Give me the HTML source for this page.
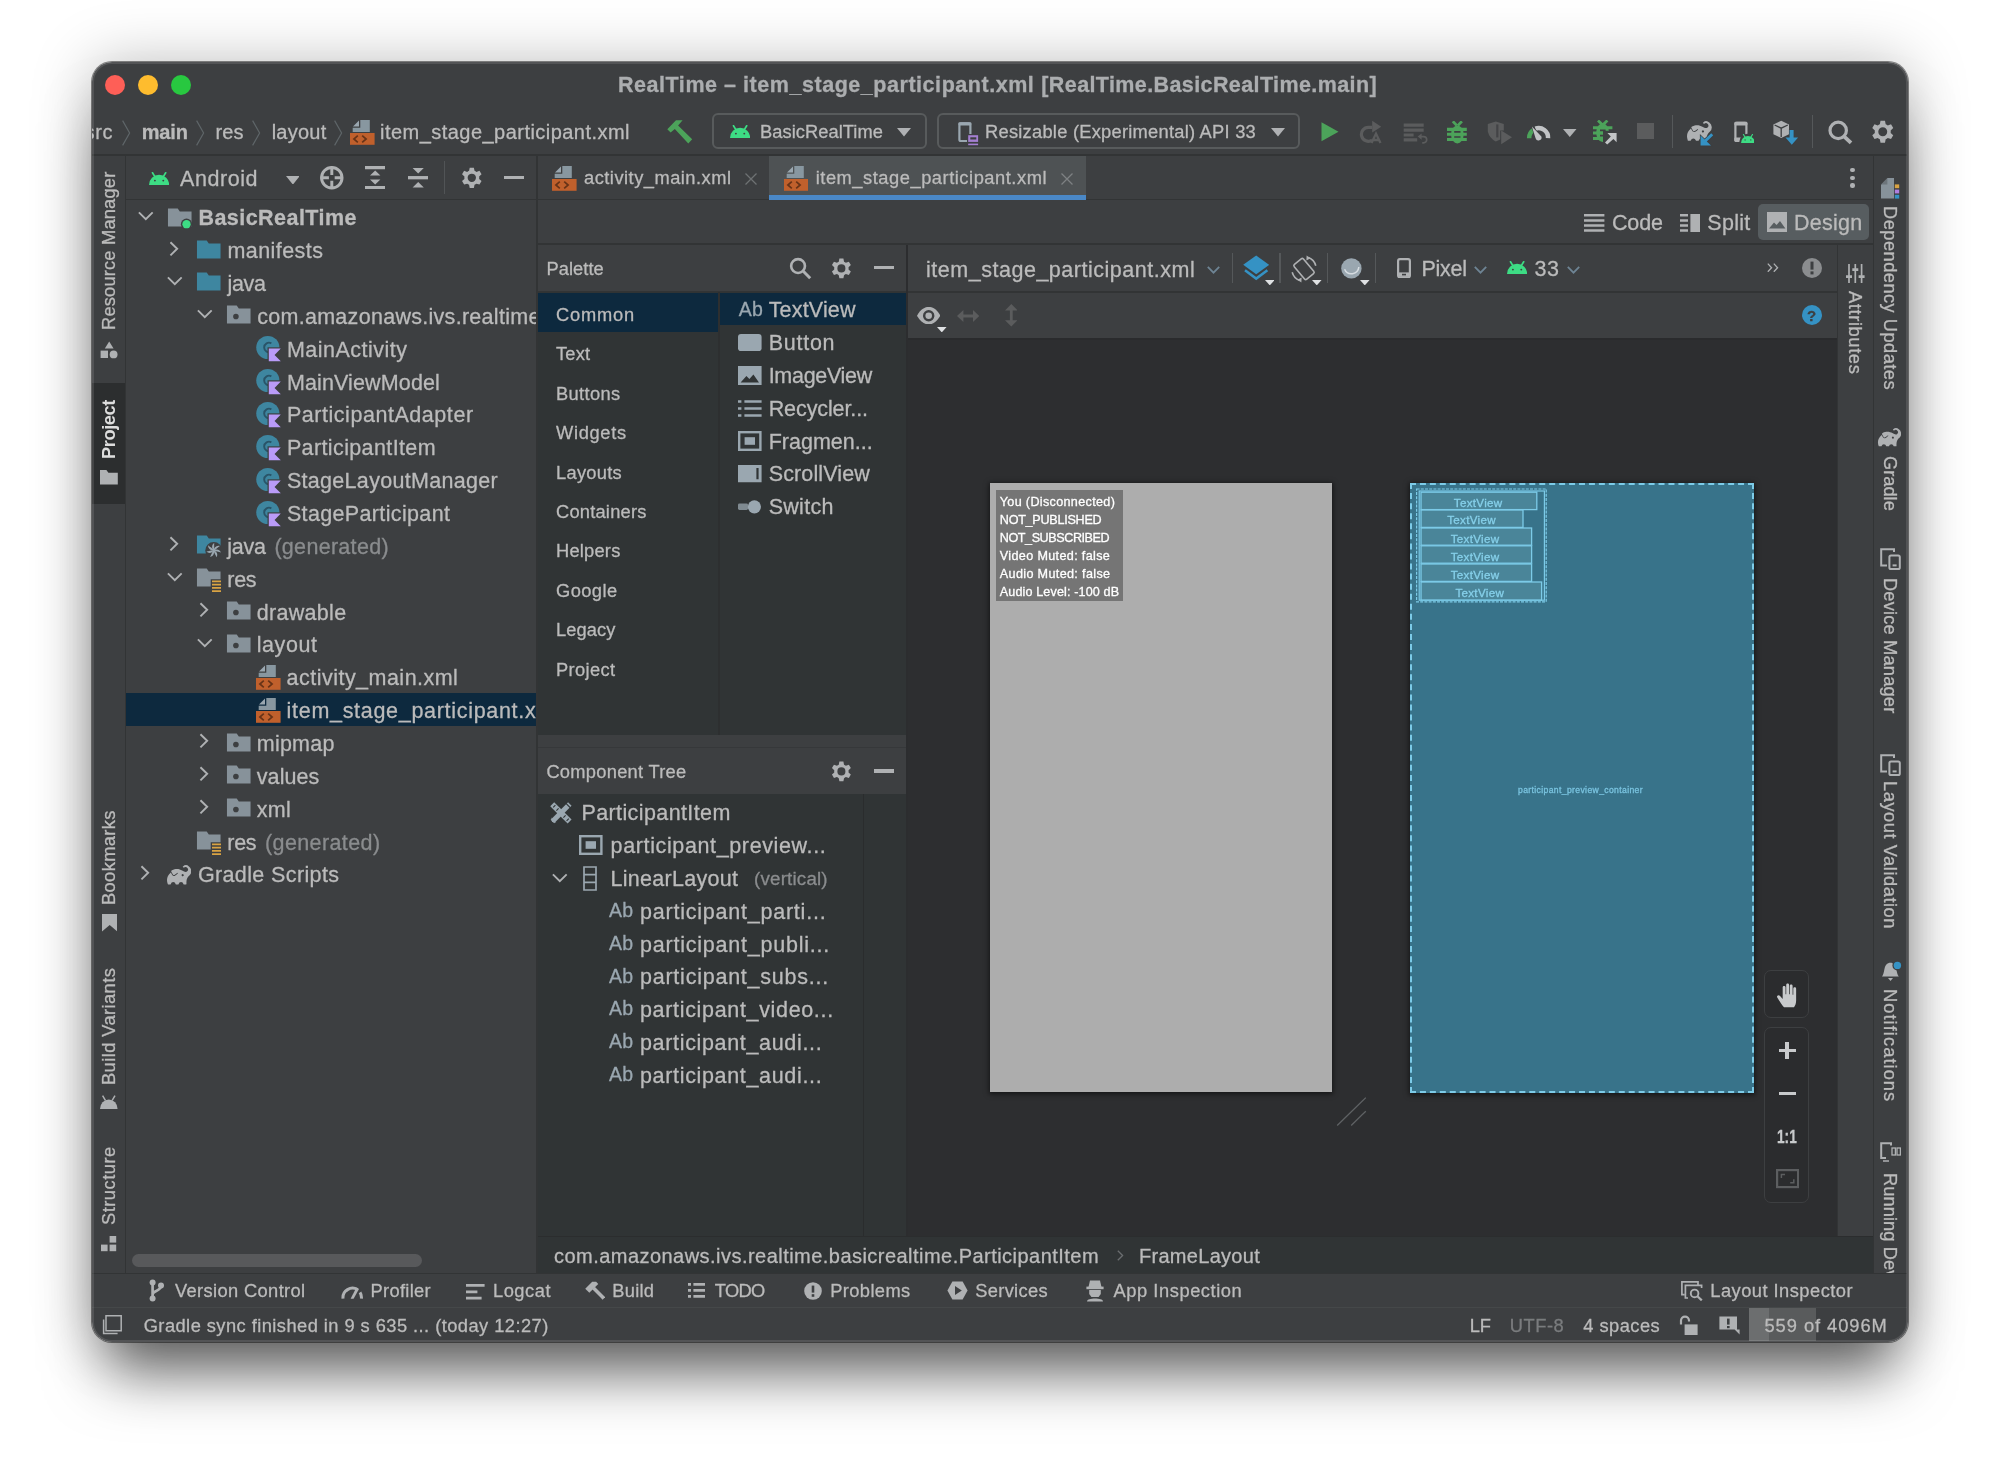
<!DOCTYPE html>
<html lang="en"><head><meta charset="utf-8"><title>RealTime – item_stage_participant.xml</title>
<style>html,body{margin:0;padding:0}body{width:1999px;height:1464px;background:#fff;overflow:hidden;position:relative;font-family:'Liberation Sans',sans-serif;}#win{position:absolute;left:92px;top:62px;width:1816px;height:1279.5px;background:#3d3f41;border-radius:20px;overflow:hidden;will-change:transform;}#shadow{position:absolute;left:92px;top:62px;width:1816px;height:1279.5px;border-radius:20px;box-shadow:0 0 0 1px rgba(0,0,0,.45),0 45px 60px -15px rgba(0,0,0,.58),0 0 60px rgba(0,0,0,.25);}#win div,#win span,#win svg{position:absolute;}#win span{white-space:nowrap;-webkit-text-stroke:0.3px;}#edge{position:absolute;left:91.5px;top:61.5px;width:1816.8px;height:1280.5px;border-radius:20px;box-sizing:border-box;border:2.6px solid rgba(255,255,255,.115);pointer-events:none}</style></head>
<body>
<div id="shadow"></div>
<div id="win">
<div style="left:13.0px;top:13.2px;width:20.0px;height:20.0px;background:#fe5f57;border-radius:50%;"></div>
<div style="left:46.0px;top:13.2px;width:20.0px;height:20.0px;background:#febc2e;border-radius:50%;"></div>
<div style="left:78.8px;top:13.2px;width:20.0px;height:20.0px;background:#28c840;border-radius:50%;"></div>
<span id="t0" style="left:526.0px;top:8.9px;font-size:21.5px;line-height:28px;color:#abadaf;font-weight:bold;letter-spacing:0.542px;">RealTime – item_stage_participant.xml</span>
<span id="t1" style="left:949.3px;top:8.9px;font-size:21.5px;line-height:28px;color:#abadaf;font-weight:bold;letter-spacing:0.395px;">[RealTime.BasicRealTime.main]</span>
<div style="left:-1.0px;top:92.0px;width:1816.0px;height:1.6px;background:#323435;"></div>
<span id="t2" style="left:-7.4px;top:57.4px;font-size:20px;line-height:26px;color:#bbbbbb;letter-spacing:0.642px;">src</span>
<svg style="left:30.0px;top:58.0px;" width="9" height="26" viewBox="0 0 9 26"><path d="M0.6 0.6 L7.6 13 L0.6 25.4" fill="none" stroke="#5e6568" stroke-width="1.2"/></svg>
<span id="t3" style="left:49.7px;top:57.4px;font-size:20px;line-height:26px;color:#bbbbbb;font-weight:bold;letter-spacing:-0.172px;">main</span>
<svg style="left:104.0px;top:58.0px;" width="9" height="26" viewBox="0 0 9 26"><path d="M0.6 0.6 L7.6 13 L0.6 25.4" fill="none" stroke="#5e6568" stroke-width="1.2"/></svg>
<span id="t4" style="left:123.5px;top:57.4px;font-size:20px;line-height:26px;color:#bbbbbb;letter-spacing:0.137px;">res</span>
<svg style="left:160.0px;top:58.0px;" width="9" height="26" viewBox="0 0 9 26"><path d="M0.6 0.6 L7.6 13 L0.6 25.4" fill="none" stroke="#5e6568" stroke-width="1.2"/></svg>
<span id="t5" style="left:179.7px;top:57.4px;font-size:20px;line-height:26px;color:#bbbbbb;letter-spacing:0.236px;">layout</span>
<svg style="left:241.7px;top:58.0px;" width="9" height="26" viewBox="0 0 9 26"><path d="M0.6 0.6 L7.6 13 L0.6 25.4" fill="none" stroke="#5e6568" stroke-width="1.2"/></svg>
<svg style="left:258.0px;top:58.0px;" width="24.6" height="24.8" viewBox="0 0 24.6 24.8"><path d="M10.3 0 H19.8 V12 H2.7 V7.7 H10.3 Z" fill="#8897a0"/><path d="M3 6.4 L9 0.4 V6.4 Z" fill="#9aa7b0"/><rect x="0" y="13" width="24.6" height="11.8" fill="#c0602c"/><path d="M7.8 15.6 L3.9 19 L7.8 22.4 M12.2 15.6 L16.1 19 L12.2 22.4" fill="none" stroke="#4a2410" stroke-width="1.7" opacity=".75"/></svg>
<span id="t6" style="left:288.0px;top:57.4px;font-size:20px;line-height:26px;color:#bbbbbb;letter-spacing:0.466px;">item_stage_participant.xml</span>
<svg style="left:574.0px;top:57.0px;" width="28" height="26" viewBox="0 0 28 26"><path d="M1.3 10.3 L10.0 1.3 L16.6 1.3 L12.1 6.4 L26.2 20.2 L22.3 24.4 L8.8 10.0 L4.6 13.6 Z" fill="#4ca35a"/></svg>
<div style="left:620px;top:51px;width:214.6px;height:36.4px;border:2px solid #585b5c;border-radius:6px;box-sizing:border-box"></div>
<svg style="left:637.7px;top:63.2px;" width="20.2" height="13.0" viewBox="0 0 20.2 13"><path d="M0 13 A10.1 10.2 0 0 1 20.2 13 Z" fill="#3ddc84"/><path d="M3.5 0.8 L6.3 5.4 M16.7 0.8 L13.9 5.4" stroke="#3ddc84" stroke-width="1.7" stroke-linecap="round"/><circle cx="5.9" cy="8.6" r="0.95" fill="#3d3f41"/><circle cx="14.3" cy="8.6" r="0.95" fill="#3d3f41"/></svg>
<span id="t7" style="left:668.0px;top:57.9px;font-size:18.3px;line-height:24px;color:#bbbbbb;letter-spacing:0.057px;">BasicRealTime</span>
<svg style="left:805.0px;top:66.2px;" width="14" height="8.5" viewBox="0 0 14 8.5"><path d="M0 0 H14 L7.0 8.5 Z" fill="#afb1b3"/></svg>
<div style="left:845px;top:51px;width:362.6px;height:36.4px;border:2px solid #585b5c;border-radius:6px;box-sizing:border-box"></div>
<svg style="left:865.0px;top:58.5px;" width="22" height="25" viewBox="0 0 22 25"><rect x="2.4" y="2.4" width="11" height="17.6" rx="1.6" fill="none" stroke="#9aa7b0" stroke-width="2.2"/><rect x="1.3" y="1.3" width="13.2" height="3.2" rx="1.4" fill="#9aa7b0"/><rect x="10" y="13" width="12" height="12" fill="#3d3f41"/><rect x="11.2" y="14.2" width="9.9" height="6.7" fill="#a47fd1"/><rect x="13.3" y="16.3" width="6" height="2.2" fill="#3d3f41"/><rect x="11.2" y="22.6" width="9.9" height="1.6" fill="#a47fd1"/></svg>
<span id="t8" style="left:893.0px;top:57.9px;font-size:18.3px;line-height:24px;color:#bbbbbb;letter-spacing:0.253px;">Resizable (Experimental) API 33</span>
<svg style="left:1178.5px;top:66.2px;" width="14" height="8.5" viewBox="0 0 14 8.5"><path d="M0 0 H14 L7.0 8.5 Z" fill="#afb1b3"/></svg>
<svg style="left:1229.0px;top:60.0px;" width="18" height="20" viewBox="0 0 18 20"><path d="M0.5 0.3 L17.5 9.8 L0.5 19.3 Z" fill="#4ca35a"/></svg>
<svg style="left:1267.0px;top:58.0px;" width="24" height="24" viewBox="0 0 24 24"><path d="M13 7.3 H9.5 A7 7 0 1 0 13.2 20.2" fill="none" stroke="#5b5c5d" stroke-width="3.2"/><path d="M13.2 0.8 L22.2 6.7 L13.2 12.5 Z" fill="#5b5c5d"/><path d="M12.5 23 L17 13.6 L21.5 23 M14 20 H20" fill="none" stroke="#5b5c5d" stroke-width="2.3"/></svg>
<svg style="left:1311.0px;top:60.0px;" width="25" height="22" viewBox="0 0 25 22"><path d="M0.7 3.1 H20.7 M0.7 8.05 H20.7 M0.7 13 H10.6 M0.7 17.95 H14.2" stroke="#5b5c5d" stroke-width="3.2"/><path d="M17.6 14.6 H20.6 A3.1 3.1 0 0 1 20.6 20.8 H19.2" fill="none" stroke="#5b5c5d" stroke-width="1.7"/><path d="M14.7 14.6 L18.6 11.5 V17.7 Z" fill="#5b5c5d"/></svg>
<svg style="left:1353.5px;top:58.5px;" width="22" height="23" viewBox="0 0 22 23"><ellipse cx="11.35" cy="13.4" rx="6.3" ry="9" fill="#4ca35a"/><path d="M1 8.4 H20.8 M1 13.2 H20.8 M1 18.5 H20.8" stroke="#4ca35a" stroke-width="3.1"/><path d="M6.8 0.3 L10.9 4.6 M15.9 0.3 L11.8 4.6" stroke="#4ca35a" stroke-width="2.8"/><path d="M8.2 10.8 H14.5 M8.2 16 H14.5" stroke="#3d3f41" stroke-width="1.7"/></svg>
<svg style="left:1395.0px;top:59.0px;" width="26" height="25" viewBox="0 0 26 25"><path d="M0.8 3 L8.8 0.6 L16.8 3 V9.6 H13.2 V18.4 L8.8 20.6 Q2.4 17.4 0.8 10.6 Z" fill="#5b5c5d"/><path d="M9.2 3.4 H11.4 V16.4 H9.2 Z" fill="#3d3f41" opacity=".8"/><path d="M14.2 9.4 L25 16.3 L14.2 23.3 Z" fill="#5b5c5d"/></svg>
<svg style="left:1434.0px;top:59.0px;" width="26" height="22" viewBox="0 0 26 22"><path d="M3.15 17.2 A9.45 9.45 0 0 1 7.6 8.9" fill="none" stroke="#4ca35a" stroke-width="4.5"/><path d="M9.4 7.6 A9.45 9.45 0 0 1 22.05 17.2" fill="none" stroke="#c2c4c6" stroke-width="4.5"/><path d="M5.9 5.5 L15.4 15.4 A3 3 0 0 1 9.6 17.2 Z" fill="#c2c4c6" stroke="#3d3f41" stroke-width="1.1" paint-order="stroke"/></svg>
<svg style="left:1471.0px;top:66.5px;" width="13.5" height="8" viewBox="0 0 13.5 8"><path d="M0 0 H13.5 L6.75 8 Z" fill="#afb1b3"/></svg>
<svg style="left:1500.0px;top:58.0px;" width="26" height="25" viewBox="0 0 26 25"><ellipse cx="10.6" cy="12.6" rx="6.4" ry="9.4" fill="#4ca35a"/><path d="M1 7.8 H9 M1 13 H9 M1 18.4 H9 M12 7.8 H20.4" stroke="#4ca35a" stroke-width="3"/><path d="M6 0.5 L10.4 4.8 M15.4 0.5 L11 4.8" stroke="#4ca35a" stroke-width="2.8"/><path d="M8 10.4 H13.6 M8 15.6 H12" stroke="#3d3f41" stroke-width="1.6"/><path d="M11 10.8 H26 V25 H11 Z" fill="#3d3f41"/><path d="M15.4 13 H24.6 V22.2 L21.4 19 L15.2 24.6 L13 22.4 L18.8 16.4 Z" fill="#c2c4c6"/></svg>
<div style="left:1545.2px;top:61.4px;width:16.4px;height:16.0px;background:#5b5c5d;"></div>
<div style="left:1580.0px;top:53.0px;width:1.3px;height:33.0px;background:#55585a;"></div>
<svg style="left:1593.9px;top:56.6px;" width="27.2" height="28" viewBox="0 0 27.2 28"><path d="M14.57,2.24A2.75,2.75,0,0,0,10.75,2.2a.26.26,0,0,0,0,.38l.33.34a.26.26,0,0,0,.34,0,1.56,1.56,0,0,1,2.05,2.35c-1.81,1.81-4.22-3.26-9.7-.65a.75.75,0,0,0-.32,1.05l.94,1.62a.74.74,0,0,0,1,.28l0,0,0,0,.41-.23a9.62,9.62,0,0,0,1.29-1,.27.27,0,0,1,.35,0,.25.25,0,0,1,0,.38A10.1,10.1,0,0,1,6.1,7.8l0,0-.41.23a1.22,1.22,0,0,1-.61.16,1.27,1.27,0,0,1-1.1-.63L3.07,6a6.74,6.74,0,0,0-1.95,7.41.26.26,0,0,0,.25.17H2.82a.26.26,0,0,0,.26-.23,1.53,1.53,0,0,1,3,0,.26.26,0,0,0,.26.23H7.79a.26.26,0,0,0,.26-.23,1.53,1.53,0,0,1,3,0,.26.26,0,0,0,.26.23h1.43a.26.26,0,0,0,.26-.26c0-2,0-4,2-5.47A3.66,3.66,0,0,0,14.57,2.24ZM10.92,8.33h0a.66.66,0,1,1,.26-.9A.66.66,0,0,1,10.92,8.33Z" fill="#afb1b3" fill-rule="evenodd" transform="scale(1.6)"/><path d="M26.6 13.6 L16.6 13.6 L16.6 27.6 L27.2 27.6 Z" fill="#3d3f41" opacity="0"/><path d="M25.2 14.2 L27.2 16.2 L20.8 22.6 L25 26.6 H14.6 V16.6 L18.6 20.6 Z" fill="#3592c4" stroke="#3d3f41" stroke-width="1.4" paint-order="stroke"/></svg>
<svg style="left:1641.0px;top:58.0px;" width="23" height="26" viewBox="0 0 23 26"><rect x="2.4" y="2.9" width="11" height="18" rx="1.4" fill="none" stroke="#afb1b3" stroke-width="2.2"/><rect x="1.3" y="1.8" width="13.2" height="3.6" rx="1.4" fill="#afb1b3"/><rect x="1.3" y="17.4" width="13.2" height="4.6" rx="1.4" fill="#afb1b3"/><path d="M6.4 26 V21.4 A8.2 7.6 0 0 1 22.8 21.4 V26 Z" fill="#3d3f41"/></svg>
<svg style="left:1648.6px;top:72.0px;" width="13.9" height="8.9" viewBox="0 0 20.2 13"><path d="M0 13 A10.1 10.2 0 0 1 20.2 13 Z" fill="#3ddc84"/><path d="M3.5 0.8 L6.3 5.4 M16.7 0.8 L13.9 5.4" stroke="#3ddc84" stroke-width="1.7" stroke-linecap="round"/><circle cx="5.9" cy="8.6" r="0.95" fill="#3d3f41"/><circle cx="14.3" cy="8.6" r="0.95" fill="#3d3f41"/></svg>
<svg style="left:1681.0px;top:57.0px;" width="27" height="27" viewBox="0 0 27 27"><path d="M8.2 1.7 L16 5.4 V15.2 L8.2 19 L0.4 15.2 V5.4 Z" fill="#afb1b3"/><path d="M1.6 6 L8.2 9.2 L14.8 6 M8.2 9.2 V18" fill="none" stroke="#3d3f41" stroke-width="1.3"/><path d="M16.6 10.9 H20.6 V18.6 H25.1 L18.8 25.8 L12.5 18.6 H16.6 Z" fill="#3592c4" stroke="#3d3f41" stroke-width="1.3" paint-order="stroke"/></svg>
<div style="left:1719.6px;top:53.0px;width:1.3px;height:33.0px;background:#55585a;"></div>
<svg style="left:1735.5px;top:58.0px;" width="25" height="25" viewBox="0 0 25 25"><circle cx="10.2" cy="10.4" r="8.2" fill="none" stroke="#afb1b3" stroke-width="3.2"/><path d="M16 16.4 L23 22.8" stroke="#afb1b3" stroke-width="3.8"/></svg>
<svg style="left:1776.5px;top:55.6px;" width="27.52" height="27.52" viewBox="0 0 16 16"><path transform="translate(0 0.75)" d="M6.7 0.9 H9.3 L9.7 2.9 A5.4 5.4 0 0 1 10.9 3.6 L12.8 2.9 L14.1 5.1 L12.6 6.5 A5.4 5.4 0 0 1 12.6 8 L14.1 9.3 L12.8 11.5 L10.9 10.9 A5.4 5.4 0 0 1 9.7 11.6 L9.3 13.6 H6.7 L6.3 11.6 A5.4 5.4 0 0 1 5.1 10.9 L3.2 11.5 L1.9 9.3 L3.4 8 A5.4 5.4 0 0 1 3.4 6.5 L1.9 5.1 L3.2 2.9 L5.1 3.6 A5.4 5.4 0 0 1 6.3 2.9 Z M8 4.65 A2.6 2.6 0 1 0 8 9.85 A2.6 2.6 0 1 0 8 4.65 Z" fill="#afb1b3" fill-rule="evenodd"/></svg>
<div style="left:33.0px;top:93.6px;width:1.4px;height:1118.0px;background:#323435;"></div>
<div style="left:0.0px;top:321.0px;width:33.0px;height:121.3px;background:#2c2e2f;"></div>
<span id="t9" style="left:5.3px;top:268.4px;font-size:18.3px;line-height:24px;color:#bbb;transform-origin:0 0;transform:rotate(-90deg);letter-spacing:0.183px;">Resource Manager</span>
<svg style="left:8.0px;top:278.5px;" width="18" height="18" viewBox="0 0 18 18"><path d="M9.2 0.4 L13.6 7.6 H4.8 Z" fill="#afb1b3"/><rect x="0.6" y="9.6" width="7.4" height="7.4" fill="#afb1b3"/><circle cx="13.6" cy="13.4" r="3.9" fill="#afb1b3"/></svg>
<span id="t10" style="left:5.3px;top:397.0px;font-size:18.3px;line-height:24px;color:#dddddd;transform-origin:0 0;transform:rotate(-90deg);font-weight:bold;letter-spacing:-0.426px;-webkit-text-stroke:0;">Project</span>
<svg style="left:8.3px;top:408.3px;" width="18" height="15" viewBox="0 0 18 15"><path d="M0 0 H6.4 L8.4 2.8 H17.8 V14.6 H0 Z" fill="#afb1b3"/></svg>
<span id="t11" style="left:5.3px;top:842.8px;font-size:18.3px;line-height:24px;color:#bbb;transform-origin:0 0;transform:rotate(-90deg);letter-spacing:0.373px;">Bookmarks</span>
<svg style="left:9.5px;top:851.8px;" width="15.5" height="17.8" viewBox="0 0 15.5 17.8"><path d="M0 0 H15.4 V17.6 L7.7 11 L0 17.6 Z" fill="#afb1b3"/></svg>
<span id="t12" style="left:5.3px;top:1022.6px;font-size:18.3px;line-height:24px;color:#bbb;transform-origin:0 0;transform:rotate(-90deg);letter-spacing:0.411px;">Build Variants</span>
<svg style="left:8.4px;top:1032.5px;" width="17.6" height="14" viewBox="0 0 17.6 14"><path d="M0 14 A8.8 9.6 0 0 1 17.6 14 Z" fill="#afb1b3"/><path d="M2.6 0.6 L5.4 5.4 M15 0.6 L12.2 5.4" stroke="#afb1b3" stroke-width="1.5"/></svg>
<span id="t13" style="left:5.3px;top:1163.2px;font-size:18.3px;line-height:24px;color:#bbb;transform-origin:0 0;transform:rotate(-90deg);letter-spacing:0.503px;">Structure</span>
<svg style="left:9.3px;top:1174.0px;" width="15.6" height="15.6" viewBox="0 0 15.6 15.6"><rect x="8.6" y="0" width="6.6" height="6.6" fill="#afb1b3"/><rect x="0" y="8.6" width="6.6" height="6.6" fill="#afb1b3"/><rect x="8.6" y="8.6" width="6.6" height="6.6" fill="#afb1b3"/></svg>
<div style="left:444.0px;top:93.6px;width:1.6px;height:1118.0px;background:#323435;"></div>
<div style="left:34.4px;top:136.8px;width:410.0px;height:1.4px;background:#323435;"></div>
<svg style="left:57.2px;top:109.6px;" width="20.2" height="13.0" viewBox="0 0 20.2 13"><path d="M0 13 A10.1 10.2 0 0 1 20.2 13 Z" fill="#3ddc84"/><path d="M3.5 0.8 L6.3 5.4 M16.7 0.8 L13.9 5.4" stroke="#3ddc84" stroke-width="1.7" stroke-linecap="round"/><circle cx="5.9" cy="8.6" r="0.95" fill="#3d3f41"/><circle cx="14.3" cy="8.6" r="0.95" fill="#3d3f41"/></svg>
<span id="t14" style="left:88.0px;top:102.9px;font-size:21.5px;line-height:28px;color:#bbbbbb;letter-spacing:0.556px;">Android</span>
<svg style="left:193.5px;top:113.7px;" width="13.8" height="8.6" viewBox="0 0 13.8 8.6"><path d="M0 0 H13.8 L6.9 8.6 Z" fill="#afb1b3"/></svg>
<svg style="left:227.0px;top:102.8px;" width="25.6" height="25.6" viewBox="0 0 16 16"><circle cx="8" cy="8" r="6.4" fill="none" stroke="#afb1b3" stroke-width="1.85"/><path d="M8 1 V6.2 M8 9.8 V15 M1 8 H6.2 M9.8 8 H15" stroke="#afb1b3" stroke-width="1.85"/></svg>
<svg style="left:273.0px;top:103.8px;" width="20.4" height="23.4" viewBox="0 0 20.4 23.4"><path d="M0 1.7 H20.4 M0 21.6 H20.4" stroke="#afb1b3" stroke-width="3.3"/><path d="M5 9.4 L10.2 4.6 L15.4 9.4 Z M5 13.4 L10.2 18.6 L15.4 13.4 Z" fill="#afb1b3"/></svg>
<svg style="left:315.7px;top:103.8px;" width="20.4" height="23.4" viewBox="0 0 20.4 23.4"><path d="M0 11.7 H20.4" stroke="#afb1b3" stroke-width="3.3"/><path d="M4.6 2 L10.2 7.6 L15.8 2 Z M4.6 21.6 L10.2 16 L15.8 21.6 Z" fill="#afb1b3"/></svg>
<div style="left:352.0px;top:99.0px;width:1.3px;height:33.0px;background:#515456;"></div>
<svg style="left:366.5px;top:103.4px;" width="25.6" height="25.6" viewBox="0 0 16 16"><path transform="translate(0 0.75)" d="M6.7 0.9 H9.3 L9.7 2.9 A5.4 5.4 0 0 1 10.9 3.6 L12.8 2.9 L14.1 5.1 L12.6 6.5 A5.4 5.4 0 0 1 12.6 8 L14.1 9.3 L12.8 11.5 L10.9 10.9 A5.4 5.4 0 0 1 9.7 11.6 L9.3 13.6 H6.7 L6.3 11.6 A5.4 5.4 0 0 1 5.1 10.9 L3.2 11.5 L1.9 9.3 L3.4 8 A5.4 5.4 0 0 1 3.4 6.5 L1.9 5.1 L3.2 2.9 L5.1 3.6 A5.4 5.4 0 0 1 6.3 2.9 Z M8 4.65 A2.6 2.6 0 1 0 8 9.85 A2.6 2.6 0 1 0 8 4.65 Z" fill="#afb1b3" fill-rule="evenodd"/></svg>
<div style="left:411.7px;top:113.9px;width:20.6px;height:3.4px;background:#afb1b3;"></div>
<div style="left:34.4px;top:631.2px;width:409.6px;height:32.7px;background:#0d293e;"></div>
<svg style="left:40.6px;top:140.6px;" width="25.6" height="25.6" viewBox="0 0 16 16"><path d="M3.7 5.9 L8 10.1 L12.3 5.9" fill="none" stroke="#afb1b3" stroke-width="1.2"/></svg>
<svg style="left:75.3px;top:143.3px;" width="25.6" height="25.6" viewBox="0 0 16 16"><path d="M0.6 2.2 H6.7 L8 4.1 H15.35 V13.45 H0.6 Z" fill="#87929a"/><circle cx="12.2" cy="12" r="3.5" fill="#3d3f41"/><circle cx="12.2" cy="12" r="2.6" fill="#3ddc84"/></svg>
<span id="t15" style="left:106.4px;top:142.2px;font-size:21.5px;line-height:28px;color:#bbbbbb;font-weight:bold;letter-spacing:0.462px;">BasicRealTime</span>
<svg style="left:69.2px;top:173.5px;" width="25.6" height="25.6" viewBox="0 0 16 16"><path d="M5.9 3.9 L10.1 8 L5.9 12.1" fill="none" stroke="#afb1b3" stroke-width="1.2"/></svg>
<svg style="left:104.4px;top:174.6px;" width="25.6" height="25.6" viewBox="0 0 16 16"><path d="M0.6 2.2 H6.7 L8 4.1 H15.35 V13.45 H0.6 Z" fill="#3e86a0"/></svg>
<span id="t16" style="left:135.4px;top:175.1px;font-size:21.5px;line-height:28px;color:#bbbbbb;letter-spacing:0.443px;">manifests</span>
<svg style="left:70.4px;top:206.3px;" width="25.6" height="25.6" viewBox="0 0 16 16"><path d="M3.7 5.9 L8 10.1 L12.3 5.9" fill="none" stroke="#afb1b3" stroke-width="1.2"/></svg>
<svg style="left:104.4px;top:207.4px;" width="25.6" height="25.6" viewBox="0 0 16 16"><path d="M0.6 2.2 H6.7 L8 4.1 H15.35 V13.45 H0.6 Z" fill="#3e86a0"/></svg>
<span id="t17" style="left:135.4px;top:207.9px;font-size:21.5px;line-height:28px;color:#bbbbbb;letter-spacing:-0.263px;">java</span>
<svg style="left:100.0px;top:239.2px;" width="25.6" height="25.6" viewBox="0 0 16 16"><path d="M3.7 5.9 L8 10.1 L12.3 5.9" fill="none" stroke="#afb1b3" stroke-width="1.2"/></svg>
<svg style="left:134.0px;top:240.3px;" width="25.6" height="25.6" viewBox="0 0 16 16"><path d="M0.6 2.2 H6.7 L8 4.1 H15.35 V13.45 H0.6 Z" fill="#87929a"/><circle cx="6.2" cy="9.1" r="1.75" fill="#3d3f41"/></svg>
<div style="left:164.0px;top:238.2px;width:280.0px;height:30.0px;overflow:hidden;">
<span id="t18" style="left:1.2px;top:2.6px;font-size:21.5px;line-height:28px;color:#bbbbbb;letter-spacing:0.288px;">com.amazonaws.ivs.realtime</span>
<span id="t19" style="left:284.7px;top:2.6px;font-size:21.5px;line-height:28px;color:#bbbbbb;letter-spacing:0.169px;">.basicrealtime</span>
</div>
<svg style="left:164.3px;top:273.4px;" width="27.2" height="27.2" viewBox="0 0 17 17"><circle cx="7.4" cy="7.8" r="7.25" fill="#3e86a0"/><path d="M9.6 5.2 A3 3 0 1 0 9.6 10.4" fill="none" stroke="#295468" stroke-width="1.2"/><path d="M7.2 7.7 H17 V17 H7.2 Z" fill="#3d3f41"/><path d="M8 8.5 H15.5 L11.6 12.45 L15.5 16.4 H8 Z" fill="#b99bf8"/></svg>
<span id="t20" style="left:194.9px;top:273.6px;font-size:21.5px;line-height:28px;color:#bbbbbb;letter-spacing:0.500px;">MainActivity</span>
<svg style="left:164.3px;top:306.3px;" width="27.2" height="27.2" viewBox="0 0 17 17"><circle cx="7.4" cy="7.8" r="7.25" fill="#3e86a0"/><path d="M9.6 5.2 A3 3 0 1 0 9.6 10.4" fill="none" stroke="#295468" stroke-width="1.2"/><path d="M7.2 7.7 H17 V17 H7.2 Z" fill="#3d3f41"/><path d="M8 8.5 H15.5 L11.6 12.45 L15.5 16.4 H8 Z" fill="#b99bf8"/></svg>
<span id="t21" style="left:194.9px;top:306.5px;font-size:21.5px;line-height:28px;color:#bbbbbb;letter-spacing:0.132px;">MainViewModel</span>
<svg style="left:164.3px;top:339.2px;" width="27.2" height="27.2" viewBox="0 0 17 17"><circle cx="7.4" cy="7.8" r="7.25" fill="#3e86a0"/><path d="M9.6 5.2 A3 3 0 1 0 9.6 10.4" fill="none" stroke="#295468" stroke-width="1.2"/><path d="M7.2 7.7 H17 V17 H7.2 Z" fill="#3d3f41"/><path d="M8 8.5 H15.5 L11.6 12.45 L15.5 16.4 H8 Z" fill="#b99bf8"/></svg>
<span id="t22" style="left:194.9px;top:339.4px;font-size:21.5px;line-height:28px;color:#bbbbbb;letter-spacing:0.545px;">ParticipantAdapter</span>
<svg style="left:164.3px;top:372.0px;" width="27.2" height="27.2" viewBox="0 0 17 17"><circle cx="7.4" cy="7.8" r="7.25" fill="#3e86a0"/><path d="M9.6 5.2 A3 3 0 1 0 9.6 10.4" fill="none" stroke="#295468" stroke-width="1.2"/><path d="M7.2 7.7 H17 V17 H7.2 Z" fill="#3d3f41"/><path d="M8 8.5 H15.5 L11.6 12.45 L15.5 16.4 H8 Z" fill="#b99bf8"/></svg>
<span id="t23" style="left:194.9px;top:372.2px;font-size:21.5px;line-height:28px;color:#bbbbbb;letter-spacing:0.380px;">ParticipantItem</span>
<svg style="left:164.3px;top:404.9px;" width="27.2" height="27.2" viewBox="0 0 17 17"><circle cx="7.4" cy="7.8" r="7.25" fill="#3e86a0"/><path d="M9.6 5.2 A3 3 0 1 0 9.6 10.4" fill="none" stroke="#295468" stroke-width="1.2"/><path d="M7.2 7.7 H17 V17 H7.2 Z" fill="#3d3f41"/><path d="M8 8.5 H15.5 L11.6 12.45 L15.5 16.4 H8 Z" fill="#b99bf8"/></svg>
<span id="t24" style="left:194.9px;top:405.1px;font-size:21.5px;line-height:28px;color:#bbbbbb;letter-spacing:0.305px;">StageLayoutManager</span>
<svg style="left:164.3px;top:437.7px;" width="27.2" height="27.2" viewBox="0 0 17 17"><circle cx="7.4" cy="7.8" r="7.25" fill="#3e86a0"/><path d="M9.6 5.2 A3 3 0 1 0 9.6 10.4" fill="none" stroke="#295468" stroke-width="1.2"/><path d="M7.2 7.7 H17 V17 H7.2 Z" fill="#3d3f41"/><path d="M8 8.5 H15.5 L11.6 12.45 L15.5 16.4 H8 Z" fill="#b99bf8"/></svg>
<span id="t25" style="left:194.9px;top:437.9px;font-size:21.5px;line-height:28px;color:#bbbbbb;letter-spacing:0.352px;">StageParticipant</span>
<svg style="left:69.2px;top:469.2px;" width="25.6" height="25.6" viewBox="0 0 16 16"><path d="M5.9 3.9 L10.1 8 L5.9 12.1" fill="none" stroke="#afb1b3" stroke-width="1.2"/></svg>
<svg style="left:103.7px;top:470.3px;" width="25.6" height="27.2" viewBox="0 0 16 17"><path d="M0.6 2.2 H6.7 L8 4.1 H15.35 V13.45 H0.6 Z" fill="#3e86a0"/><circle cx="11.1" cy="11.5" r="5.3" fill="#3d3f41"/><g transform="translate(11.1 11.5)" fill="#9aa7b0"><path transform="rotate(0.0)" d="M0.2 0.3 C-1.3 -1.2 -1.6 -3.4 0.3 -4.7 C0.1 -3.4 0.5 -1.4 0.2 0.3 Z"/><path transform="rotate(51.4)" d="M0.2 0.3 C-1.3 -1.2 -1.6 -3.4 0.3 -4.7 C0.1 -3.4 0.5 -1.4 0.2 0.3 Z"/><path transform="rotate(102.9)" d="M0.2 0.3 C-1.3 -1.2 -1.6 -3.4 0.3 -4.7 C0.1 -3.4 0.5 -1.4 0.2 0.3 Z"/><path transform="rotate(154.3)" d="M0.2 0.3 C-1.3 -1.2 -1.6 -3.4 0.3 -4.7 C0.1 -3.4 0.5 -1.4 0.2 0.3 Z"/><path transform="rotate(205.7)" d="M0.2 0.3 C-1.3 -1.2 -1.6 -3.4 0.3 -4.7 C0.1 -3.4 0.5 -1.4 0.2 0.3 Z"/><path transform="rotate(257.1)" d="M0.2 0.3 C-1.3 -1.2 -1.6 -3.4 0.3 -4.7 C0.1 -3.4 0.5 -1.4 0.2 0.3 Z"/><path transform="rotate(308.6)" d="M0.2 0.3 C-1.3 -1.2 -1.6 -3.4 0.3 -4.7 C0.1 -3.4 0.5 -1.4 0.2 0.3 Z"/></g></svg>
<span id="t26" style="left:135.3px;top:470.8px;font-size:21.5px;line-height:28px;color:#bbbbbb;letter-spacing:-0.263px;">java</span>
<span id="t27" style="left:182.4px;top:470.8px;font-size:21.5px;line-height:28px;color:#8a8c8e;letter-spacing:0.304px;">(generated)</span>
<svg style="left:70.4px;top:502.1px;" width="25.6" height="25.6" viewBox="0 0 16 16"><path d="M3.7 5.9 L8 10.1 L12.3 5.9" fill="none" stroke="#afb1b3" stroke-width="1.2"/></svg>
<svg style="left:103.7px;top:503.2px;" width="25.6" height="27.2" viewBox="0 0 16 17"><path d="M0.6 2.2 H6.7 L8 4.1 H15.35 V8.9 H9.2 V13.4 H0.6 Z" fill="#87929a"/><path d="M10 10.3 H16.4 M10 12.3 H16.4 M10 14.3 H16.4 M10 16.3 H16.4" stroke="#d9a343" stroke-width="1.1"/></svg>
<span id="t28" style="left:135.3px;top:503.7px;font-size:21.5px;line-height:28px;color:#bbbbbb;letter-spacing:-0.292px;">res</span>
<svg style="left:98.8px;top:534.9px;" width="25.6" height="25.6" viewBox="0 0 16 16"><path d="M5.9 3.9 L10.1 8 L5.9 12.1" fill="none" stroke="#afb1b3" stroke-width="1.2"/></svg>
<svg style="left:134.0px;top:536.0px;" width="25.6" height="25.6" viewBox="0 0 16 16"><path d="M0.6 2.2 H6.7 L8 4.1 H15.35 V13.45 H0.6 Z" fill="#87929a"/><circle cx="6.2" cy="9.1" r="1.75" fill="#3d3f41"/></svg>
<span id="t29" style="left:164.8px;top:536.5px;font-size:21.5px;line-height:28px;color:#bbbbbb;letter-spacing:0.294px;">drawable</span>
<svg style="left:100.0px;top:567.8px;" width="25.6" height="25.6" viewBox="0 0 16 16"><path d="M3.7 5.9 L8 10.1 L12.3 5.9" fill="none" stroke="#afb1b3" stroke-width="1.2"/></svg>
<svg style="left:134.0px;top:568.9px;" width="25.6" height="25.6" viewBox="0 0 16 16"><path d="M0.6 2.2 H6.7 L8 4.1 H15.35 V13.45 H0.6 Z" fill="#87929a"/><circle cx="6.2" cy="9.1" r="1.75" fill="#3d3f41"/></svg>
<span id="t30" style="left:164.8px;top:569.4px;font-size:21.5px;line-height:28px;color:#bbbbbb;letter-spacing:0.537px;">layout</span>
<svg style="left:164.0px;top:603.2px;" width="24.6" height="24.8" viewBox="0 0 24.6 24.8"><path d="M10.3 0 H19.8 V12 H2.7 V7.7 H10.3 Z" fill="#8897a0"/><path d="M3 6.4 L9 0.4 V6.4 Z" fill="#9aa7b0"/><rect x="0" y="13" width="24.6" height="11.8" fill="#c0602c"/><path d="M7.8 15.6 L3.9 19 L7.8 22.4 M12.2 15.6 L16.1 19 L12.2 22.4" fill="none" stroke="#4a2410" stroke-width="1.7" opacity=".75"/></svg>
<span id="t31" style="left:194.6px;top:602.2px;font-size:21.5px;line-height:28px;color:#bbbbbb;letter-spacing:0.477px;">activity_main.xml</span>
<svg style="left:164.0px;top:636.1px;" width="24.6" height="24.8" viewBox="0 0 24.6 24.8"><path d="M10.3 0 H19.8 V12 H2.7 V7.7 H10.3 Z" fill="#8897a0"/><path d="M3 6.4 L9 0.4 V6.4 Z" fill="#9aa7b0"/><rect x="0" y="13" width="24.6" height="11.8" fill="#c0602c"/><path d="M7.8 15.6 L3.9 19 L7.8 22.4 M12.2 15.6 L16.1 19 L12.2 22.4" fill="none" stroke="#4a2410" stroke-width="1.7" opacity=".75"/></svg>
<div style="left:193.0px;top:632.5px;width:251.0px;height:30.0px;overflow:hidden;">
<span id="t32" style="left:1.6px;top:2.6px;font-size:21.5px;line-height:28px;color:#bbbbbb;letter-spacing:0.698px;">item_stage_participant.xml</span>
</div>
<svg style="left:98.8px;top:666.4px;" width="25.6" height="25.6" viewBox="0 0 16 16"><path d="M5.9 3.9 L10.1 8 L5.9 12.1" fill="none" stroke="#afb1b3" stroke-width="1.2"/></svg>
<svg style="left:134.0px;top:667.5px;" width="25.6" height="25.6" viewBox="0 0 16 16"><path d="M0.6 2.2 H6.7 L8 4.1 H15.35 V13.45 H0.6 Z" fill="#87929a"/><circle cx="6.2" cy="9.1" r="1.75" fill="#3d3f41"/></svg>
<span id="t33" style="left:164.8px;top:668.0px;font-size:21.5px;line-height:28px;color:#bbbbbb;letter-spacing:0.221px;">mipmap</span>
<svg style="left:98.8px;top:699.2px;" width="25.6" height="25.6" viewBox="0 0 16 16"><path d="M5.9 3.9 L10.1 8 L5.9 12.1" fill="none" stroke="#afb1b3" stroke-width="1.2"/></svg>
<svg style="left:134.0px;top:700.3px;" width="25.6" height="25.6" viewBox="0 0 16 16"><path d="M0.6 2.2 H6.7 L8 4.1 H15.35 V13.45 H0.6 Z" fill="#87929a"/><circle cx="6.2" cy="9.1" r="1.75" fill="#3d3f41"/></svg>
<span id="t34" style="left:164.8px;top:700.8px;font-size:21.5px;line-height:28px;color:#bbbbbb;letter-spacing:0.073px;">values</span>
<svg style="left:98.8px;top:732.1px;" width="25.6" height="25.6" viewBox="0 0 16 16"><path d="M5.9 3.9 L10.1 8 L5.9 12.1" fill="none" stroke="#afb1b3" stroke-width="1.2"/></svg>
<svg style="left:134.0px;top:733.2px;" width="25.6" height="25.6" viewBox="0 0 16 16"><path d="M0.6 2.2 H6.7 L8 4.1 H15.35 V13.45 H0.6 Z" fill="#87929a"/><circle cx="6.2" cy="9.1" r="1.75" fill="#3d3f41"/></svg>
<span id="t35" style="left:164.8px;top:733.7px;font-size:21.5px;line-height:28px;color:#bbbbbb;letter-spacing:0.220px;">xml</span>
<svg style="left:103.7px;top:766.0px;" width="25.6" height="27.2" viewBox="0 0 16 17"><path d="M0.6 2.2 H6.7 L8 4.1 H15.35 V8.9 H9.2 V13.4 H0.6 Z" fill="#87929a"/><path d="M10 10.3 H16.4 M10 12.3 H16.4 M10 14.3 H16.4 M10 16.3 H16.4" stroke="#d9a343" stroke-width="1.1"/></svg>
<span id="t36" style="left:135.3px;top:766.5px;font-size:21.5px;line-height:28px;color:#bbbbbb;letter-spacing:-0.292px;">res</span>
<span id="t37" style="left:173.0px;top:766.5px;font-size:21.5px;line-height:28px;color:#8a8c8e;letter-spacing:0.395px;">(generated)</span>
<svg style="left:39.8px;top:797.8px;" width="25.6" height="25.6" viewBox="0 0 16 16"><path d="M5.9 3.9 L10.1 8 L5.9 12.1" fill="none" stroke="#afb1b3" stroke-width="1.2"/></svg>
<svg style="left:73.6px;top:801.4px;" width="25.2" height="25.2" viewBox="0 0 16 16"><path d="M14.57,2.24A2.75,2.75,0,0,0,10.75,2.2a.26.26,0,0,0,0,.38l.33.34a.26.26,0,0,0,.34,0,1.56,1.56,0,0,1,2.05,2.35c-1.81,1.81-4.22-3.26-9.7-.65a.75.75,0,0,0-.32,1.05l.94,1.62a.74.74,0,0,0,1,.28l0,0,0,0,.41-.23a9.62,9.62,0,0,0,1.29-1,.27.27,0,0,1,.35,0,.25.25,0,0,1,0,.38A10.1,10.1,0,0,1,6.1,7.8l0,0-.41.23a1.22,1.22,0,0,1-.61.16,1.27,1.27,0,0,1-1.1-.63L3.07,6a6.74,6.74,0,0,0-1.95,7.41.26.26,0,0,0,.25.17H2.82a.26.26,0,0,0,.26-.23,1.53,1.53,0,0,1,3,0,.26.26,0,0,0,.26.23H7.79a.26.26,0,0,0,.26-.23,1.53,1.53,0,0,1,3,0,.26.26,0,0,0,.26.23h1.43a.26.26,0,0,0,.26-.26c0-2,0-4,2-5.47A3.66,3.66,0,0,0,14.57,2.24ZM10.92,8.33h0a.66.66,0,1,1,.26-.9A.66.66,0,0,1,10.92,8.33Z" fill="#afb1b3" fill-rule="evenodd"/></svg>
<span id="t38" style="left:105.9px;top:799.4px;font-size:21.5px;line-height:28px;color:#bbbbbb;letter-spacing:0.377px;">Gradle Scripts</span>
<div style="left:39.5px;top:1191.7px;width:290.0px;height:13.8px;background:#58595b;border-radius:7px;"></div>
<div style="left:445.6px;top:136.8px;width:1336.0px;height:1.4px;background:#323435;"></div>
<div style="left:677.0px;top:94.0px;width:317.0px;height:42.8px;background:#4e5254;"></div>
<div style="left:677.0px;top:133.4px;width:317.0px;height:4.6px;background:#4a88c7;"></div>
<svg style="left:460.0px;top:104.0px;" width="24.6" height="24.8" viewBox="0 0 24.6 24.8"><path d="M10.3 0 H19.8 V12 H2.7 V7.7 H10.3 Z" fill="#8897a0"/><path d="M3 6.4 L9 0.4 V6.4 Z" fill="#9aa7b0"/><rect x="0" y="13" width="24.6" height="11.8" fill="#c0602c"/><path d="M7.8 15.6 L3.9 19 L7.8 22.4 M12.2 15.6 L16.1 19 L12.2 22.4" fill="none" stroke="#4a2410" stroke-width="1.7" opacity=".75"/></svg>
<span id="t39" style="left:492.0px;top:103.9px;font-size:18.3px;line-height:24px;color:#bbbbbb;letter-spacing:0.490px;">activity_main.xml</span>
<svg style="left:653.3px;top:110.5px;" width="12" height="12" viewBox="0 0 12 12"><path d="M0.5 0.5 L11.5 11.5 M11.5 0.5 L0.5 11.5" stroke="#6e7173" stroke-width="1.3"/></svg>
<svg style="left:691.8px;top:104.0px;" width="24.6" height="24.8" viewBox="0 0 24.6 24.8"><path d="M10.3 0 H19.8 V12 H2.7 V7.7 H10.3 Z" fill="#8897a0"/><path d="M3 6.4 L9 0.4 V6.4 Z" fill="#9aa7b0"/><rect x="0" y="13" width="24.6" height="11.8" fill="#c0602c"/><path d="M7.8 15.6 L3.9 19 L7.8 22.4 M12.2 15.6 L16.1 19 L12.2 22.4" fill="none" stroke="#4a2410" stroke-width="1.7" opacity=".75"/></svg>
<span id="t40" style="left:723.7px;top:103.9px;font-size:18.3px;line-height:24px;color:#bbbbbb;letter-spacing:0.533px;">item_stage_participant.xml</span>
<svg style="left:968.8px;top:110.5px;" width="12" height="12" viewBox="0 0 12 12"><path d="M0.5 0.5 L11.5 11.5 M11.5 0.5 L0.5 11.5" stroke="#7d8183" stroke-width="1.3"/></svg>
<div style="left:1758.4px;top:105.8px;width:4.4px;height:4.4px;background:#afb1b3;border-radius:50%;"></div>
<div style="left:1758.4px;top:113.6px;width:4.4px;height:4.4px;background:#afb1b3;border-radius:50%;"></div>
<div style="left:1758.4px;top:121.2px;width:4.4px;height:4.4px;background:#afb1b3;border-radius:50%;"></div>
<div style="left:445.6px;top:181.4px;width:1336.0px;height:1.6px;background:#323435;"></div>
<svg style="left:1492.3px;top:151.6px;" width="20.4" height="18" viewBox="0 0 20.4 18"><path d="M0 1.3 H20.4 M0 6.4 H20.4 M0 11.5 H20.4 M0 16.6 H20.4" stroke="#afb1b3" stroke-width="2.5"/></svg>
<span id="t41" style="left:1519.9px;top:146.9px;font-size:21.5px;line-height:28px;color:#bbbbbb;letter-spacing:-0.077px;">Code</span>
<svg style="left:1587.8px;top:151.6px;" width="20.4" height="18" viewBox="0 0 20.4 18"><path d="M0 1.3 H8 M0 6.4 H8 M0 11.5 H8 M0 16.6 H8" stroke="#afb1b3" stroke-width="2.5"/><rect x="10.4" y="0" width="10" height="18" fill="#afb1b3"/></svg>
<span id="t42" style="left:1615.3px;top:146.9px;font-size:21.5px;line-height:28px;color:#bbbbbb;letter-spacing:0.272px;">Split</span>
<div style="left:1665.5px;top:142.0px;width:111.3px;height:35.8px;background:#575d60;border-radius:5px;"></div>
<svg style="left:1675.0px;top:150.0px;" width="20.4" height="20.4" viewBox="0 0 20.4 20.4"><path d="M0 0 H20.4 V20.4 H0 Z M2 16.6 H18.4 L13 9 L9.6 13 L7 10.4 Z" fill="#afb1b3" fill-rule="evenodd"/></svg>
<span id="t43" style="left:1702.0px;top:146.9px;font-size:21.5px;line-height:28px;color:#bbbbbb;letter-spacing:0.260px;">Design</span>
<div style="left:445.6px;top:183.0px;width:368.6px;height:46.0px;background:#3d3f41;"></div>
<span id="t44" style="left:454.4px;top:194.7px;font-size:18.3px;line-height:24px;color:#bbbbbb;letter-spacing:0.068px;">Palette</span>
<svg style="left:695.5px;top:194.0px;" width="24.0" height="24.0" viewBox="0 0 16 16"><circle cx="6.7" cy="6.7" r="4.6" fill="none" stroke="#afb1b3" stroke-width="1.75"/><path d="M10.2 10.2 L14.8 14.8" stroke="#afb1b3" stroke-width="2"/></svg>
<svg style="left:737.0px;top:193.8px;" width="24.8" height="24.8" viewBox="0 0 16 16"><path transform="translate(0 0.75)" d="M6.7 0.9 H9.3 L9.7 2.9 A5.4 5.4 0 0 1 10.9 3.6 L12.8 2.9 L14.1 5.1 L12.6 6.5 A5.4 5.4 0 0 1 12.6 8 L14.1 9.3 L12.8 11.5 L10.9 10.9 A5.4 5.4 0 0 1 9.7 11.6 L9.3 13.6 H6.7 L6.3 11.6 A5.4 5.4 0 0 1 5.1 10.9 L3.2 11.5 L1.9 9.3 L3.4 8 A5.4 5.4 0 0 1 3.4 6.5 L1.9 5.1 L3.2 2.9 L5.1 3.6 A5.4 5.4 0 0 1 6.3 2.9 Z M8 4.65 A2.6 2.6 0 1 0 8 9.85 A2.6 2.6 0 1 0 8 4.65 Z" fill="#afb1b3" fill-rule="evenodd"/></svg>
<div style="left:782.0px;top:204.0px;width:20.0px;height:3.4px;background:#afb1b3;"></div>
<div style="left:445.6px;top:228.6px;width:368.6px;height:1.6px;background:#323435;"></div>
<div style="left:445.6px;top:230.2px;width:180.6px;height:443.0px;background:#303435;"></div>
<div style="left:626.2px;top:230.2px;width:1.8px;height:443.0px;background:#2d2f30;"></div>
<div style="left:628.0px;top:230.2px;width:186.2px;height:443.0px;background:#303435;"></div>
<div style="left:445.6px;top:230.8px;width:180.4px;height:39.0px;background:#0d293e;"></div>
<div style="left:628.0px;top:230.8px;width:186.2px;height:32.4px;background:#0d293e;"></div>
<span id="t45" style="left:464.0px;top:240.6px;font-size:18.3px;line-height:24px;color:#bbbbbb;letter-spacing:0.805px;">Common</span>
<span id="t46" style="left:464.0px;top:280.1px;font-size:18.3px;line-height:24px;color:#bbbbbb;letter-spacing:0.217px;">Text</span>
<span id="t47" style="left:464.0px;top:319.5px;font-size:18.3px;line-height:24px;color:#bbbbbb;letter-spacing:0.357px;">Buttons</span>
<span id="t48" style="left:464.0px;top:359.0px;font-size:18.3px;line-height:24px;color:#bbbbbb;letter-spacing:0.679px;">Widgets</span>
<span id="t49" style="left:464.0px;top:398.5px;font-size:18.3px;line-height:24px;color:#bbbbbb;letter-spacing:0.281px;">Layouts</span>
<span id="t50" style="left:464.0px;top:437.9px;font-size:18.3px;line-height:24px;color:#bbbbbb;letter-spacing:0.218px;">Containers</span>
<span id="t51" style="left:464.0px;top:477.4px;font-size:18.3px;line-height:24px;color:#bbbbbb;letter-spacing:0.214px;">Helpers</span>
<span id="t52" style="left:464.0px;top:516.9px;font-size:18.3px;line-height:24px;color:#bbbbbb;letter-spacing:0.424px;">Google</span>
<span id="t53" style="left:464.0px;top:556.4px;font-size:18.3px;line-height:24px;color:#bbbbbb;letter-spacing:0.075px;">Legacy</span>
<span id="t54" style="left:464.0px;top:595.8px;font-size:18.3px;line-height:24px;color:#bbbbbb;letter-spacing:0.356px;">Project</span>
<span id="t55" style="left:646.8px;top:235.1px;font-size:19.5px;line-height:25px;color:#9aa7b0;letter-spacing:0.3px;">Ab</span>
<span id="t56" style="left:676.7px;top:234.1px;font-size:21.5px;line-height:28px;color:#bbbbbb;letter-spacing:0.168px;">TextView</span>
<svg style="left:646.0px;top:272.0px;" width="23.6" height="17.2" viewBox="0 0 23.6 17.2"><rect width="23.6" height="17.2" rx="3" fill="#9aa7b0"/></svg>
<span id="t57" style="left:676.7px;top:267.0px;font-size:21.5px;line-height:28px;color:#bbbbbb;letter-spacing:0.740px;">Button</span>
<svg style="left:646.0px;top:303.8px;" width="23.6" height="19.6" viewBox="0 0 23.6 19.6"><path d="M0 0 H23.6 V19.6 H0 Z M2.6 16.4 H21 L15.4 8.4 L11.4 13 L8.4 10 Z" fill="#9aa7b0" fill-rule="evenodd"/></svg>
<span id="t58" style="left:676.7px;top:299.8px;font-size:21.5px;line-height:28px;color:#bbbbbb;letter-spacing:-0.297px;">ImageView</span>
<svg style="left:646.0px;top:337.9px;" width="23.6" height="17" viewBox="0 0 23.6 17"><path d="M0 1.5 H3.4 M6.4 1.5 H23.6 M0 8.5 H3.4 M6.4 8.5 H23.6 M0 15.5 H3.4 M6.4 15.5 H23.6" stroke="#9aa7b0" stroke-width="2.7"/></svg>
<span id="t59" style="left:676.7px;top:332.7px;font-size:21.5px;line-height:28px;color:#bbbbbb;letter-spacing:-0.098px;">Recycler...</span>
<svg style="left:646.0px;top:369.2px;" width="23.6" height="20" viewBox="0 0 23.6 20"><rect x="1.2" y="1.2" width="21.2" height="17.6" fill="none" stroke="#9aa7b0" stroke-width="2.4"/><rect x="6.6" y="6.2" width="10.4" height="7.6" fill="#9aa7b0"/></svg>
<span id="t60" style="left:676.7px;top:365.6px;font-size:21.5px;line-height:28px;color:#bbbbbb;letter-spacing:0.005px;">Fragmen...</span>
<svg style="left:646.0px;top:403.4px;" width="23.6" height="17.2" viewBox="0 0 23.6 17.2"><path d="M0 0 H23.6 V17.2 H0 Z M18.4 3 H20.6 V14.2 H18.4 Z" fill="#9aa7b0" fill-rule="evenodd"/></svg>
<span id="t61" style="left:676.7px;top:398.4px;font-size:21.5px;line-height:28px;color:#bbbbbb;letter-spacing:0.122px;">ScrollView</span>
<svg style="left:646.0px;top:437.9px;" width="23.6" height="14" viewBox="0 0 23.6 14"><rect x="0" y="3.4" width="10" height="6.6" rx="1.4" fill="#9aa7b0" opacity=".75"/><circle cx="16.4" cy="6.8" r="6.6" fill="#9aa7b0"/></svg>
<span id="t62" style="left:676.7px;top:431.3px;font-size:21.5px;line-height:28px;color:#bbbbbb;letter-spacing:0.279px;">Switch</span>
<div style="left:445.6px;top:673.2px;width:368.6px;height:12.4px;background:#3d3f41;"></div>
<div style="left:445.6px;top:685.0px;width:368.6px;height:1.2px;background:#36383a;"></div>
<div style="left:445.6px;top:686.2px;width:368.6px;height:45.4px;background:#3d3f41;"></div>
<span id="t63" style="left:454.4px;top:697.8px;font-size:18.3px;line-height:24px;color:#bbbbbb;letter-spacing:0.273px;">Component Tree</span>
<svg style="left:737.2px;top:697.2px;" width="24.8" height="24.8" viewBox="0 0 16 16"><path transform="translate(0 0.75)" d="M6.7 0.9 H9.3 L9.7 2.9 A5.4 5.4 0 0 1 10.9 3.6 L12.8 2.9 L14.1 5.1 L12.6 6.5 A5.4 5.4 0 0 1 12.6 8 L14.1 9.3 L12.8 11.5 L10.9 10.9 A5.4 5.4 0 0 1 9.7 11.6 L9.3 13.6 H6.7 L6.3 11.6 A5.4 5.4 0 0 1 5.1 10.9 L3.2 11.5 L1.9 9.3 L3.4 8 A5.4 5.4 0 0 1 3.4 6.5 L1.9 5.1 L3.2 2.9 L5.1 3.6 A5.4 5.4 0 0 1 6.3 2.9 Z M8 4.65 A2.6 2.6 0 1 0 8 9.85 A2.6 2.6 0 1 0 8 4.65 Z" fill="#afb1b3" fill-rule="evenodd"/></svg>
<div style="left:782.4px;top:707.3px;width:20.0px;height:3.4px;background:#afb1b3;"></div>
<div style="left:445.6px;top:731.6px;width:368.6px;height:443.0px;background:#303435;"></div>
<div style="left:770.8px;top:731.6px;width:1.4px;height:443.0px;background:#2a2c2d;"></div>
<svg style="left:456.6px;top:738.5px;" width="24" height="24" viewBox="0 0 24 24"><g stroke="#9aa7b0" stroke-linecap="butt"><path d="M3.2 3.2 L20.6 20.6" stroke-width="5.6"/><path d="M20.8 3 L3.4 20.4" stroke-width="5"/></g><path d="M3 21 L2.4 16.6 L7.2 21.4 Z" fill="#9aa7b0"/><path d="M4.2 6.4 L6.4 4.2 M7.4 9.6 L9.6 7.4 M14.4 16.6 L16.6 14.4 M17.6 19.8 L19.8 17.6" stroke="#303435" stroke-width="1.1"/><path d="M17 2.4 L21.4 6.8" stroke="#303435" stroke-width="1.2"/></svg>
<span id="t64" style="left:489.4px;top:737.3px;font-size:21.5px;line-height:28px;color:#bbbbbb;letter-spacing:0.400px;">ParticipantItem</span>
<svg style="left:487.0px;top:773.3px;" width="23.6" height="20" viewBox="0 0 23.6 20"><rect x="1.2" y="1.2" width="21.2" height="17.6" fill="none" stroke="#9aa7b0" stroke-width="2.4"/><rect x="6.6" y="6.2" width="10.4" height="7.6" fill="#9aa7b0"/></svg>
<span id="t65" style="left:518.6px;top:770.1px;font-size:21.5px;line-height:28px;color:#bbbbbb;letter-spacing:0.628px;">participant_preview...</span>
<svg style="left:455.2px;top:803.1px;" width="25.6" height="25.6" viewBox="0 0 16 16"><path d="M3.7 5.9 L8 10.1 L12.3 5.9" fill="none" stroke="#afb1b3" stroke-width="1.2"/></svg>
<svg style="left:491.3px;top:803.9px;" width="14" height="25" viewBox="0 0 14 25"><path d="M1 1 H13 V24 H1 Z M1 8.7 H13 M1 16.3 H13" fill="none" stroke="#9aa7b0" stroke-width="1.7"/></svg>
<span id="t66" style="left:518.6px;top:802.9px;font-size:21.5px;line-height:28px;color:#bbbbbb;letter-spacing:0.272px;">LinearLayout</span>
<span id="t67" style="left:662.0px;top:804.9px;font-size:18.8px;line-height:24px;color:#8a8c8e;letter-spacing:0.179px;">(vertical)</span>
<span id="t68" style="left:516.9px;top:836.0px;font-size:19.5px;line-height:25px;color:#9aa7b0;letter-spacing:0.3px;">Ab</span>
<span id="t69" style="left:548.0px;top:835.7px;font-size:21.5px;line-height:28px;color:#bbbbbb;letter-spacing:0.775px;">participant_parti...</span>
<span id="t70" style="left:516.9px;top:868.8px;font-size:19.5px;line-height:25px;color:#9aa7b0;letter-spacing:0.3px;">Ab</span>
<span id="t71" style="left:548.0px;top:868.5px;font-size:21.5px;line-height:28px;color:#bbbbbb;letter-spacing:0.775px;">participant_publi...</span>
<span id="t72" style="left:516.9px;top:901.6px;font-size:19.5px;line-height:25px;color:#9aa7b0;letter-spacing:0.3px;">Ab</span>
<span id="t73" style="left:548.0px;top:901.3px;font-size:21.5px;line-height:28px;color:#bbbbbb;letter-spacing:0.763px;">participant_subs...</span>
<span id="t74" style="left:516.9px;top:934.4px;font-size:19.5px;line-height:25px;color:#9aa7b0;letter-spacing:0.3px;">Ab</span>
<span id="t75" style="left:548.0px;top:934.1px;font-size:21.5px;line-height:28px;color:#bbbbbb;letter-spacing:0.666px;">participant_video...</span>
<span id="t76" style="left:516.9px;top:967.2px;font-size:19.5px;line-height:25px;color:#9aa7b0;letter-spacing:0.3px;">Ab</span>
<span id="t77" style="left:548.0px;top:966.9px;font-size:21.5px;line-height:28px;color:#bbbbbb;letter-spacing:0.661px;">participant_audi...</span>
<span id="t78" style="left:516.9px;top:1000.0px;font-size:19.5px;line-height:25px;color:#9aa7b0;letter-spacing:0.3px;">Ab</span>
<span id="t79" style="left:548.0px;top:999.7px;font-size:21.5px;line-height:28px;color:#bbbbbb;letter-spacing:0.661px;">participant_audi...</span>
<div style="left:814.2px;top:183.0px;width:1.8px;height:992.0px;background:#2c2d2f;"></div>
<span id="t80" style="left:834.0px;top:193.7px;font-size:21.5px;line-height:28px;color:#bbbbbb;letter-spacing:0.522px;">item_stage_participant.xml</span>
<svg style="left:1114.5px;top:203.5px;" width="13" height="8" viewBox="0 0 13 8"><path d="M0.8 0.8 L6.5 6.6 L12.2 0.8" fill="none" stroke="#6e8494" stroke-width="1.8"/></svg>
<div style="left:1139.8px;top:190.6px;width:1.3px;height:30.4px;background:#55585a;"></div>
<svg style="left:1150.8px;top:193.0px;" width="26.4" height="26" viewBox="0 0 26.4 26"><path d="M13.2 0.4 L26.2 9.8 L13.2 19.2 L0.2 9.8 Z" fill="#3592c4"/><path d="M2 15.2 L13.2 23.6 L24.4 15.2" fill="none" stroke="#3592c4" stroke-width="2.5"/></svg>
<svg style="left:1172.6px;top:217.5px;" width="9.6" height="5.4" viewBox="0 0 9.6 5.4"><path d="M0 0 H9.6 L4.8 5.4 Z" fill="#dfe1e3"/></svg>
<div style="left:1187.4px;top:190.6px;width:1.3px;height:30.4px;background:#55585a;"></div>
<svg style="left:1197.5px;top:192.5px;" width="28" height="28" viewBox="0 0 28 28"><g fill="none" stroke="#afb1b3" stroke-width="1.6"><rect x="8" y="4.4" width="12" height="19.2" rx="1.6" transform="rotate(-40 14 14)"/><path d="M18.4 2.6 A12.2 12.2 0 0 1 25.8 10.8 M9.6 25.4 A12.2 12.2 0 0 1 2.2 17.2"/></g><path d="M16.6 0.4 L20.6 3.2 L16.4 5.4 Z M11.4 27.6 L7.4 24.8 L11.6 22.6 Z" fill="#afb1b3"/></svg>
<svg style="left:1220.4px;top:217.5px;" width="9.6" height="5.4" viewBox="0 0 9.6 5.4"><path d="M0 0 H9.6 L4.8 5.4 Z" fill="#dfe1e3"/></svg>
<div style="left:1235.0px;top:190.6px;width:1.3px;height:30.4px;background:#55585a;"></div>
<svg style="left:1249.0px;top:195.6px;" width="21" height="21" viewBox="0 0 21 21"><circle cx="10.4" cy="10.4" r="10.2" fill="#9aa7b0"/><path d="M5.2 12 A6.6 6.6 0 0 0 16.8 8.6 A8 8 0 0 1 5.2 12 Z" fill="#3d3f41" opacity=".0"/><path d="M3.6 11.2 A7.4 7.4 0 0 0 17.8 9" fill="none" stroke="#d7dde2" stroke-width="1.5"/></svg>
<svg style="left:1268.0px;top:217.5px;" width="9.6" height="5.4" viewBox="0 0 9.6 5.4"><path d="M0 0 H9.6 L4.8 5.4 Z" fill="#dfe1e3"/></svg>
<div style="left:1283.0px;top:190.6px;width:1.3px;height:30.4px;background:#55585a;"></div>
<svg style="left:1304.8px;top:196.0px;" width="14" height="20.4" viewBox="0 0 14 20.4"><rect x="1.1" y="1.1" width="11.8" height="18.2" rx="1.8" fill="none" stroke="#afb1b3" stroke-width="2.2"/><rect x="1.6" y="14.4" width="10.8" height="4.4" fill="#afb1b3"/><rect x="5" y="15.8" width="4" height="1.6" fill="#3d3f41"/></svg>
<span id="t81" style="left:1329.5px;top:193.4px;font-size:21.5px;line-height:28px;color:#bbbbbb;letter-spacing:-0.260px;">Pixel</span>
<svg style="left:1381.5px;top:203.5px;" width="13" height="8" viewBox="0 0 13 8"><path d="M0.8 0.8 L6.5 6.6 L12.2 0.8" fill="none" stroke="#6e8494" stroke-width="1.8"/></svg>
<svg style="left:1415.2px;top:199.4px;" width="20.2" height="13.0" viewBox="0 0 20.2 13"><path d="M0 13 A10.1 10.2 0 0 1 20.2 13 Z" fill="#3ddc84"/><path d="M3.5 0.8 L6.3 5.4 M16.7 0.8 L13.9 5.4" stroke="#3ddc84" stroke-width="1.7" stroke-linecap="round"/><circle cx="5.9" cy="8.6" r="0.95" fill="#3d3f41"/><circle cx="14.3" cy="8.6" r="0.95" fill="#3d3f41"/></svg>
<span id="t82" style="left:1442.6px;top:193.4px;font-size:21.5px;line-height:28px;color:#bbbbbb;letter-spacing:0.443px;">33</span>
<svg style="left:1474.9px;top:203.5px;" width="13" height="8" viewBox="0 0 13 8"><path d="M0.8 0.8 L6.5 6.6 L12.2 0.8" fill="none" stroke="#6e8494" stroke-width="1.8"/></svg>
<svg style="left:1674.7px;top:200.6px;" width="12.4" height="9.4" viewBox="0 0 12.4 9.4"><path d="M0.8 0.6 L4.6 4.7 L0.8 8.8 M6.8 0.6 L10.6 4.7 L6.8 8.8" fill="none" stroke="#afb1b3" stroke-width="1.3"/></svg>
<svg style="left:1709.6px;top:196.0px;" width="20" height="20" viewBox="0 0 20 20"><circle cx="10" cy="10" r="10" fill="#8b8d8f"/><rect x="8.5" y="3.6" width="3" height="8" fill="#3d3f41"/><rect x="8.5" y="13.4" width="3" height="3" fill="#3d3f41"/></svg>
<div style="left:816.0px;top:229.0px;width:929.8px;height:1.6px;background:#323435;"></div>
<svg style="left:825.0px;top:244.6px;" width="23.4" height="17.4" viewBox="0 0 23.4 17.4"><path d="M0 8.7 C4 1.6 8 0 11.7 0 C15.4 0 19.4 1.6 23.4 8.7 C19.4 15.8 15.4 17.4 11.7 17.4 C8 17.4 4 15.8 0 8.7 Z" fill="#afb1b3"/><circle cx="11.7" cy="8.7" r="5.7" fill="#3d3f41"/><circle cx="11.7" cy="8.7" r="3.3" fill="#afb1b3"/></svg>
<svg style="left:845.2px;top:264.9px;" width="9.6" height="5.4" viewBox="0 0 9.6 5.4"><path d="M0 0 H9.6 L4.8 5.4 Z" fill="#dfe1e3"/></svg>
<svg style="left:865.0px;top:247.6px;" width="22.4" height="12" viewBox="0 0 22.4 12"><path d="M0 6 L6.4 0 V4.6 H16 V0 L22.4 6 L16 12 V7.4 H6.4 V12 Z" fill="#5b5c5d"/></svg>
<svg style="left:912.8px;top:242.4px;" width="12.6" height="22.6" viewBox="0 0 12.6 22.6"><path d="M6.3 0 L12.6 6.4 H7.7 V16.2 H12.6 L6.3 22.6 L0 16.2 H4.9 V6.4 H0 Z" fill="#5b5c5d"/></svg>
<svg style="left:1709.6px;top:243.3px;" width="20" height="20" viewBox="0 0 20 20"><circle cx="10" cy="10" r="10" fill="#3592c4"/></svg>
<span id="t83" style="left:1715.0px;top:244.0px;font-size:15px;line-height:20px;color:#3d3f41;font-weight:bold;">?</span>
<div style="left:816.0px;top:276.4px;width:929.8px;height:1.4px;background:#2a2b2d;"></div>
<div style="left:816.0px;top:277.6px;width:929.8px;height:897.0px;background:#2d2e30;"></div>
<div style="left:897.5px;top:421.4px;width:342.5px;height:608.4px;background:#adadad;box-shadow:0 1px 5px 1px rgba(0,0,0,.55);"></div>
<div style="left:904.4px;top:428.2px;width:126.8px;height:111.0px;background:#757575;"></div>
<span id="t84" style="left:907.8px;top:432.0px;font-size:12.6px;line-height:16px;color:#ffffff;letter-spacing:0.330px;">You (Disconnected)</span>
<span id="t85" style="left:907.8px;top:450.0px;font-size:12.6px;line-height:16px;color:#ffffff;letter-spacing:-0.261px;">NOT_PUBLISHED</span>
<span id="t86" style="left:907.8px;top:468.0px;font-size:12.6px;line-height:16px;color:#ffffff;letter-spacing:-0.433px;">NOT_SUBSCRIBED</span>
<span id="t87" style="left:907.8px;top:486.1px;font-size:12.6px;line-height:16px;color:#ffffff;letter-spacing:0.350px;">Video Muted: false</span>
<span id="t88" style="left:907.8px;top:504.1px;font-size:12.6px;line-height:16px;color:#ffffff;letter-spacing:0.349px;">Audio Muted: false</span>
<span id="t89" style="left:907.8px;top:522.1px;font-size:12.6px;line-height:16px;color:#ffffff;letter-spacing:0.123px;">Audio Level: -100 dB</span>
<div style="left:1318.0px;top:421.4px;width:343.6px;height:609.6px;background:#38738a;box-shadow:0 1px 5px 1px rgba(0,0,0,.55);"></div>
<div style="left:1318px;top:421.4px;width:343.6px;height:609.6px;box-sizing:border-box;border:2px dashed #7ccbe8;"></div>
<svg style="left:1318.0px;top:421.4px;" width="344" height="610" viewBox="0 0 344 610"><rect x="6.6" y="6.0" width="129.6" height="112.8" fill="none" stroke="#7ccbe8" stroke-width="1.2" stroke-dasharray="3 1.2"/><rect x="9.2" y="8.0" width="125.2" height="109.2" fill="none" stroke="#7ccbe8" stroke-width="1.2" /><rect x="11.0" y="9.2" width="115.8" height="17.4" fill="#4a8599" stroke="#7ccbe8" stroke-width="1.3" /><rect x="11.0" y="27.0" width="102.0" height="17.4" fill="#4a8599" stroke="#7ccbe8" stroke-width="1.3" /><rect x="11.0" y="45.0" width="110.6" height="17.2" fill="#4a8599" stroke="#7ccbe8" stroke-width="1.3" /><rect x="11.0" y="62.8" width="110.6" height="17.4" fill="#4a8599" stroke="#7ccbe8" stroke-width="1.3" /><rect x="11.0" y="81.0" width="110.6" height="17.4" fill="#4a8599" stroke="#7ccbe8" stroke-width="1.3" /><rect x="11.0" y="99.0" width="120.6" height="18.0" fill="#4a8599" stroke="#7ccbe8" stroke-width="1.3" /></svg>
<span id="t90" style="left:1361.8px;top:433.8px;font-size:11.6px;line-height:14px;color:#86d0ea;letter-spacing:0.314px;">TextView</span>
<span id="t91" style="left:1355.2px;top:451.4px;font-size:11.6px;line-height:14px;color:#86d0ea;letter-spacing:0.314px;">TextView</span>
<span id="t92" style="left:1358.7px;top:469.7px;font-size:11.6px;line-height:14px;color:#86d0ea;letter-spacing:0.314px;">TextView</span>
<span id="t93" style="left:1358.7px;top:487.7px;font-size:11.6px;line-height:14px;color:#86d0ea;letter-spacing:0.314px;">TextView</span>
<span id="t94" style="left:1358.7px;top:505.7px;font-size:11.6px;line-height:14px;color:#86d0ea;letter-spacing:0.314px;">TextView</span>
<span id="t95" style="left:1363.4px;top:524.0px;font-size:11.6px;line-height:14px;color:#86d0ea;letter-spacing:0.314px;">TextView</span>
<span id="t96" style="left:1426.0px;top:721.8px;font-size:8.6px;line-height:12px;color:#79c3df;letter-spacing:0.373px;">participant_preview_container</span>
<svg style="left:1244.0px;top:1034.0px;" width="32" height="32" viewBox="0 0 32 32"><path d="M1.2 29.5 L29.8 1.6 M15.2 29.5 L29.8 15.2" stroke="#5f6264" stroke-width="1.3"/></svg>
<div style="left:1672.4px;top:908px;width:44.8px;height:48px;box-sizing:border-box;border:1.3px solid #3d3f41;border-radius:7px;background:#2b2c2e"></div>
<div style="left:1672.4px;top:964.8px;width:44.8px;height:176.4px;box-sizing:border-box;border:1.3px solid #3d3f41;border-radius:7px;background:#2b2c2e"></div>
<svg style="left:1683.0px;top:920.4px;" width="24" height="26" viewBox="0 0 24 26"><path d="M7.2 21 C5.6 19.6 3.2 15.6 1.4 12.8 C0.6 11.4 2.4 10.2 3.6 11.4 L6 14 V4.2 C6 2.6 8.4 2.6 8.4 4.2 V10 H9 V2.2 C9 0.6 11.4 0.6 11.4 2.2 V10 H12 V3 C12 1.4 14.4 1.4 14.4 3 V10.4 H15 V5.4 C15 3.8 17.4 3.8 17.4 5.4 V15.4 C17.4 18.4 16.4 20 15.6 21 Z" fill="#c8cacc" transform="translate(0.6 0.4) scale(1.18)"/></svg>
<div style="left:1686.5px;top:987.1px;width:17.0px;height:3.4px;background:#c8cacc;"></div>
<div style="left:1693.3px;top:980.3px;width:3.4px;height:17.0px;background:#c8cacc;"></div>
<div style="left:1686.5px;top:1029.5px;width:17.0px;height:3.4px;background:#c8cacc;"></div>
<span id="t97" style="left:1685.0px;top:1061.5px;font-size:19px;line-height:25px;color:#c8cacc;font-weight:bold;transform:scaleX(.72);transform-origin:0 50%;">1:1</span>
<svg style="left:1683.6px;top:1107.4px;" width="23.2" height="19.2" viewBox="0 0 23.2 19.2"><rect x="1.1" y="1.1" width="21" height="17" fill="none" stroke="#5c5e60" stroke-width="2.2"/><path d="M5.4 9 V5.4 H9 M17.8 10.2 V13.8 H14.2" fill="none" stroke="#5c5e60" stroke-width="1.5"/></svg>
<div style="left:1745.8px;top:183.0px;width:35.6px;height:992.0px;background:#3d3f41;"></div>
<div style="left:1744.6px;top:183.0px;width:1.4px;height:992.0px;background:#323435;"></div>
<svg style="left:1754.0px;top:202.2px;" width="18.6" height="19" viewBox="0 0 18.6 19"><path d="M3 0 V19 M9.3 0 V19 M15.6 0 V19" stroke="#afb1b3" stroke-width="1.7"/><path d="M0 12.6 H6 M6.3 5.6 H12.3 M12.6 12.6 H18.6" stroke="#afb1b3" stroke-width="2.6"/></svg>
<span id="t98" style="left:1775.4px;top:229.4px;font-size:18.3px;line-height:24px;color:#bbb;transform-origin:0 0;transform:rotate(90deg);letter-spacing:0.617px;">Attributes</span>
<div style="left:1780.8px;top:93.6px;width:1.4px;height:1118.0px;background:#323435;"></div>
<svg style="left:1789.0px;top:116.0px;" width="19" height="21" viewBox="0 0 19 21"><path d="M0 6.4 L6.4 0 H13 V20.6 H0 Z" fill="#87929a"/><path d="M0 6.4 L6.4 0 V6.4 Z" fill="#3d3f41" opacity=".35"/><rect x="13.8" y="6.4" width="4.4" height="3.8" fill="#d9a343"/><rect x="13.8" y="11.6" width="4.4" height="3.8" fill="#b07fe0"/><rect x="13.8" y="16.8" width="4.4" height="3.8" fill="#3592c4"/></svg>
<span id="t99" style="left:1810.4px;top:143.6px;font-size:18.3px;line-height:24px;color:#bbb;transform-origin:0 0;transform:rotate(90deg);letter-spacing:0.454px;">Dependency Updates</span>
<svg style="left:1785.2px;top:364.4px;" width="24" height="24" viewBox="0 0 16 16"><path d="M14.57,2.24A2.75,2.75,0,0,0,10.75,2.2a.26.26,0,0,0,0,.38l.33.34a.26.26,0,0,0,.34,0,1.56,1.56,0,0,1,2.05,2.35c-1.81,1.81-4.22-3.26-9.7-.65a.75.75,0,0,0-.32,1.05l.94,1.62a.74.74,0,0,0,1,.28l0,0,0,0,.41-.23a9.62,9.62,0,0,0,1.29-1,.27.27,0,0,1,.35,0,.25.25,0,0,1,0,.38A10.1,10.1,0,0,1,6.1,7.8l0,0-.41.23a1.22,1.22,0,0,1-.61.16,1.27,1.27,0,0,1-1.1-.63L3.07,6a6.74,6.74,0,0,0-1.95,7.41.26.26,0,0,0,.25.17H2.82a.26.26,0,0,0,.26-.23,1.53,1.53,0,0,1,3,0,.26.26,0,0,0,.26.23H7.79a.26.26,0,0,0,.26-.23,1.53,1.53,0,0,1,3,0,.26.26,0,0,0,.26.23h1.43a.26.26,0,0,0,.26-.26c0-2,0-4,2-5.47A3.66,3.66,0,0,0,14.57,2.24ZM10.92,8.33h0a.66.66,0,1,1,.26-.9A.66.66,0,0,1,10.92,8.33Z" fill="#afb1b3" fill-rule="evenodd"/></svg>
<span id="t100" style="left:1810.4px;top:393.6px;font-size:18.3px;line-height:24px;color:#bbb;transform-origin:0 0;transform:rotate(90deg);letter-spacing:-0.014px;">Gradle</span>
<svg style="left:1788.0px;top:486.0px;" width="21" height="22" viewBox="0 0 21 22"><path d="M14 4 V1.2 H1.2 V17.6 H7" fill="none" stroke="#afb1b3" stroke-width="2"/><rect x="9.4" y="7.4" width="10.4" height="13.6" rx="1.6" fill="none" stroke="#afb1b3" stroke-width="2"/><rect x="12.6" y="16.4" width="4" height="2" fill="#afb1b3"/></svg>
<span id="t101" style="left:1810.4px;top:516.0px;font-size:18.3px;line-height:24px;color:#bbb;transform-origin:0 0;transform:rotate(90deg);letter-spacing:0.163px;">Device Manager</span>
<svg style="left:1788.0px;top:691.6px;" width="21" height="22" viewBox="0 0 21 22"><path d="M14 4 V1.2 H1.2 V17.6 H7" fill="none" stroke="#afb1b3" stroke-width="2"/><rect x="9.4" y="7.4" width="10.4" height="13.6" rx="1.6" fill="none" stroke="#afb1b3" stroke-width="2"/><rect x="12.6" y="16.4" width="4" height="2" fill="#afb1b3"/></svg>
<span id="t102" style="left:1810.4px;top:718.6px;font-size:18.3px;line-height:24px;color:#bbb;transform-origin:0 0;transform:rotate(90deg);letter-spacing:0.535px;">Layout Validation</span>
<svg style="left:1787.6px;top:897.4px;" width="23" height="25" viewBox="0 0 23 25"><path d="M2 17.4 C4.6 15 3.6 8.6 6.4 5.6 C8.4 3.2 12.4 3.2 14.4 5.6 C17.2 8.6 16.2 15 18.8 17.4 Z" fill="#afb1b3"/><path d="M8 19 H13 L10.5 22 Z" fill="#afb1b3"/><circle cx="17.4" cy="6.4" r="5" fill="#3d3f41"/><circle cx="17.4" cy="6.4" r="3.7" fill="#3592c4"/></svg>
<span id="t103" style="left:1810.4px;top:927.0px;font-size:18.3px;line-height:24px;color:#bbb;transform-origin:0 0;transform:rotate(90deg);letter-spacing:1.055px;">Notifications</span>
<svg style="left:1788.0px;top:1080.4px;" width="21" height="23" viewBox="0 0 21 23"><path d="M11 3.4 V1.2 H1.2 V16 H6" fill="none" stroke="#afb1b3" stroke-width="2"/><path d="M3 19 H9" stroke="#afb1b3" stroke-width="1.6"/><rect x="12" y="6" width="3.4" height="7" fill="none" stroke="#afb1b3" stroke-width="1.3"/><rect x="17" y="6" width="3.4" height="7" fill="none" stroke="#afb1b3" stroke-width="1.3"/></svg>
<div style="left:1782.2px;top:1098.0px;width:32.0px;height:112.6px;overflow:hidden;">
<span id="t104" style="left:28.2px;top:13.2px;font-size:18.3px;line-height:24px;color:#bbb;transform-origin:0 0;transform:rotate(90deg);letter-spacing:0.059px;">Running Devices</span>
</div>
<div style="left:445.6px;top:1174.6px;width:1335.2px;height:37.0px;background:#303435;"></div>
<div style="left:445.6px;top:1174.2px;width:1335.2px;height:1.2px;background:#2b2d2e;"></div>
<span id="t105" style="left:462.0px;top:1180.9px;font-size:20px;line-height:26px;color:#bbbbbb;letter-spacing:0.463px;">com.amazonaws.ivs.realtime.basicrealtime.ParticipantItem</span>
<svg style="left:1025.0px;top:1188.4px;" width="7" height="11" viewBox="0 0 7 11"><path d="M0.8 0.8 L5.6 5.5 L0.8 10.2" fill="none" stroke="#6b6e70" stroke-width="1.3"/></svg>
<span id="t106" style="left:1047.0px;top:1180.9px;font-size:20px;line-height:26px;color:#bbbbbb;letter-spacing:0.287px;">FrameLayout</span>
<div style="left:-1.0px;top:1210.8px;width:1816.0px;height:1.4px;background:#323435;"></div>
<svg style="left:57.3px;top:1217.3px;" width="16" height="23" viewBox="0 0 16 23"><circle cx="3.6" cy="3.4" r="3" fill="#afb1b3"/><circle cx="3.6" cy="19.4" r="3" fill="#afb1b3"/><circle cx="12" cy="6.4" r="3" fill="#afb1b3"/><path d="M3.6 3 V19 M3.6 15.4 C3.6 11 12 12.8 12 6.6" fill="none" stroke="#afb1b3" stroke-width="2.7"/></svg>
<span id="t107" style="left:83.0px;top:1217.1px;font-size:18.3px;line-height:24px;color:#bbbbbb;letter-spacing:0.367px;">Version Control</span>
<svg style="left:249.0px;top:1220.7px;" width="22.4" height="16" viewBox="0 0 22.4 16"><path d="M2 15.6 A9.6 9.6 0 0 1 16.6 6.6 M19 9.4 A9.6 9.6 0 0 1 20.4 15.6" fill="none" stroke="#afb1b3" stroke-width="3"/><path d="M15.4 4.6 L18 6 L12.6 15.8 L9.6 15.8 Z" fill="#afb1b3"/></svg>
<span id="t108" style="left:278.5px;top:1217.1px;font-size:18.3px;line-height:24px;color:#bbbbbb;letter-spacing:0.324px;">Profiler</span>
<svg style="left:374.0px;top:1221.5px;" width="19" height="16" viewBox="0 0 19 16"><path d="M0 1.4 H18.6 M0 7.8 H11.4 M0 14.2 H15.6" stroke="#afb1b3" stroke-width="2.7"/></svg>
<span id="t109" style="left:401.0px;top:1217.1px;font-size:18.3px;line-height:24px;color:#bbbbbb;letter-spacing:0.518px;">Logcat</span>
<svg style="left:491.6px;top:1218.1px;" width="21" height="21" viewBox="0 0 21 21"><g transform="translate(7.6 6.6) rotate(-45)" fill="#afb1b3"><path d="M-6 -3 H3.8 L6.6 -0.2 V2.8 H-6 Z"/><rect x="-1.5" y="2.4" width="3.6" height="14.6"/></g></svg>
<span id="t110" style="left:520.3px;top:1217.1px;font-size:18.3px;line-height:24px;color:#bbbbbb;letter-spacing:0.269px;">Build</span>
<svg style="left:596.2px;top:1221.3px;" width="17" height="15" viewBox="0 0 17 15"><path d="M0 1.4 H3 M5.4 1.4 H17 M0 7.4 H3 M5.4 7.4 H17 M0 13.4 H3 M5.4 13.4 H17" stroke="#afb1b3" stroke-width="2.6"/></svg>
<span id="t111" style="left:622.8px;top:1217.1px;font-size:18.3px;line-height:24px;color:#bbbbbb;letter-spacing:-0.698px;">TODO</span>
<svg style="left:712.0px;top:1219.7px;" width="18" height="18" viewBox="0 0 18 18"><circle cx="9" cy="9" r="8.8" fill="#afb1b3"/><rect x="7.7" y="3.6" width="2.6" height="7" fill="#3d3f41"/><rect x="7.7" y="12.2" width="2.6" height="2.6" fill="#3d3f41"/></svg>
<span id="t112" style="left:738.3px;top:1217.1px;font-size:18.3px;line-height:24px;color:#bbbbbb;letter-spacing:0.373px;">Problems</span>
<svg style="left:855.0px;top:1219.3px;" width="21" height="19" viewBox="0 0 21 19"><path d="M5.4 0.4 H15.6 L20.6 9.5 L15.6 18.6 H5.4 L0.4 9.5 Z" fill="#afb1b3"/><path d="M8 5 L14.8 9.5 L8 14 Z" fill="#3d3f41"/></svg>
<span id="t113" style="left:883.2px;top:1217.1px;font-size:18.3px;line-height:24px;color:#bbbbbb;letter-spacing:0.336px;">Services</span>
<svg style="left:994.4px;top:1218.3px;" width="18" height="22" viewBox="0 0 18 22"><path d="M4 0.6 H14 L15.6 7.4 H2.4 Z" fill="#afb1b3"/><rect x="0.4" y="6.6" width="17.2" height="2.6" fill="#afb1b3"/><path d="M3.2 10 H14.8 V14 L12.6 17 H5.4 L3.2 14 Z" fill="#afb1b3"/><path d="M1 21.4 C1 17.6 17 17.6 17 21.4 Z" fill="#afb1b3"/></svg>
<span id="t114" style="left:1021.5px;top:1217.1px;font-size:18.3px;line-height:24px;color:#bbbbbb;letter-spacing:0.560px;">App Inspection</span>
<svg style="left:1589.2px;top:1218.5px;" width="22" height="20" viewBox="0 0 22 20"><path d="M3.4 13.6 H0.9 V0.9 H17 V3.4 M7 17 H4.4 V4.4 H20.6 V7" fill="none" stroke="#afb1b3" stroke-width="1.7"/><circle cx="13.6" cy="12.4" r="3.8" fill="none" stroke="#afb1b3" stroke-width="1.9"/><path d="M16.4 15.2 L20.8 19.4" stroke="#afb1b3" stroke-width="2.2"/></svg>
<span id="t115" style="left:1618.3px;top:1217.1px;font-size:18.3px;line-height:24px;color:#bbbbbb;letter-spacing:0.471px;">Layout Inspector</span>
<div style="left:-1.0px;top:1244.8px;width:1816.0px;height:1.3px;background:#454849;"></div>
<svg style="left:9.4px;top:1253.0px;" width="21" height="21" viewBox="0 0 21 21"><path d="M5 0.8 H20.2 V15.8 H5 Z" fill="none" stroke="#afb1b3" stroke-width="1.5"/><path d="M2.6 4.4 V18.6 H16.6" fill="none" stroke="#afb1b3" stroke-width="1.5"/></svg>
<span id="t116" style="left:51.7px;top:1251.9px;font-size:18.3px;line-height:24px;color:#bbbbbb;letter-spacing:0.447px;">Gradle sync finished in 9 s 635 ... (today 12:27)</span>
<span id="t117" style="left:1377.8px;top:1251.9px;font-size:18.3px;line-height:24px;color:#bbbbbb;letter-spacing:-0.318px;">LF</span>
<span id="t118" style="left:1417.7px;top:1251.9px;font-size:18.3px;line-height:24px;color:#7a7c7e;letter-spacing:0.560px;">UTF-8</span>
<span id="t119" style="left:1491.2px;top:1251.9px;font-size:18.3px;line-height:24px;color:#bbbbbb;letter-spacing:0.477px;">4 spaces</span>
<svg style="left:1586.0px;top:1252.5px;" width="20" height="21" viewBox="0 0 20 21"><path d="M3 9.4 V5.6 A4 4 0 0 1 11 5.6 V6.6" fill="none" stroke="#afb1b3" stroke-width="2.2"/><rect x="6.6" y="9.4" width="13" height="10.6" fill="#afb1b3"/></svg>
<svg style="left:1627.0px;top:1253.5px;" width="21" height="19" viewBox="0 0 21 19"><path d="M0.4 0.4 H18 V13.6 H20.6 V18.6 L15.6 13.6 H0.4 Z" fill="#afb1b3"/><rect x="8" y="2.6" width="2.6" height="6" fill="#3d3f41"/><rect x="8" y="10" width="2.6" height="2.2" fill="#3d3f41"/></svg>
<div style="left:1656.8px;top:1246.0px;width:67.4px;height:33.4px;background:#595b5c;"></div>
<div style="left:1656.8px;top:1246.0px;width:20.0px;height:33.4px;background:#6c6e6f;"></div>
<span id="t120" style="left:1672.5px;top:1251.9px;font-size:18.3px;line-height:24px;color:#bbbbbb;letter-spacing:0.949px;">559 of 4096M</span>
</div>
<div id="edge"></div>
</body></html>
